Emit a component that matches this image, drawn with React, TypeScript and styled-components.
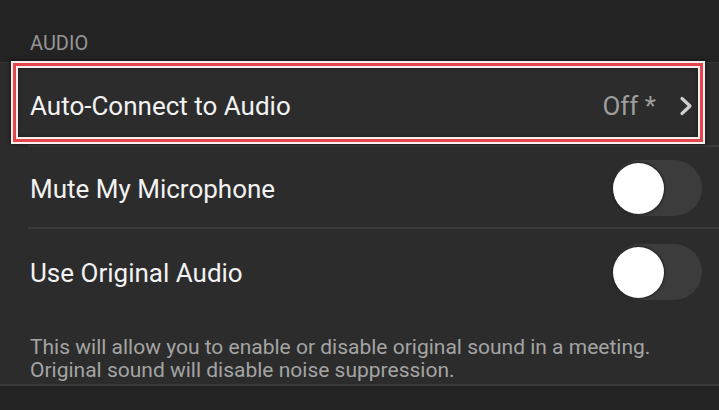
import React from "react";
import styled, { createGlobalStyle } from "styled-components";

const Global = createGlobalStyle`
  html, body { margin: 0; padding: 0; background: #232323; }
  body { font-family: Roboto, "Noto Sans", sans-serif; -webkit-font-smoothing: antialiased; }
  #root { width: 719px; height: 410px; overflow: hidden; background: #232323; }
`;

const Page = styled.div`
  display: flex;
  flex-direction: column;
  width: 719px;
`;

const SectionHeader = styled.div`
  height: 62px;
  box-sizing: border-box;
  padding: 30px 0 0 30px;
  font-size: 20px;
  line-height: 26px;
  color: #959595;
`;

const Panel = styled.div`
  background: #2c2c2c;
  border-top: 1px solid #333333;
  border-bottom: 2px solid #3a3a3a;
  display: flex;
  flex-direction: column;
`;

const Row = styled.div<{ $h: number; $focused?: boolean; $divider?: boolean }>`
  position: relative;
  height: ${(p) => p.$h}px;
  display: flex;
  align-items: center;
  justify-content: space-between;
  padding: 0 17px 0 30px;
  box-sizing: border-box;
  ${(p) =>
    p.$divider
      ? `&::before { content: ""; position: absolute; left: 28px; right: 0; bottom: 0; height: 2px; background: #3a3a3a; }`
      : ""}
  ${(p) =>
    p.$focused
      ? `padding-right: 26px;
        &::after {
          content: ""; position: absolute; left: 13px; right: 16px; top: 0; bottom: 5px;
          border: 3px solid #e2454b;
          box-shadow: 0 0 0 2px #f8eeee, inset 0 0 0 2px #f8eeee, 0 0 4px 3px rgba(0,0,0,0.4), inset 0 0 3px 3px rgba(0,0,0,0.25);
          pointer-events: none;
        }`
      : ""}
`;

const Label = styled.span`
  font-size: 26px;
  color: #f2f2f2;
  margin-top: 1px;
`;

const Value = styled.div`
  display: flex;
  align-items: center;
  gap: 23px;
  font-size: 26px;
  color: #9e9e9e;
  margin-top: 1px;
`;

const Track = styled.div`
  width: 90px;
  height: 56px;
  border-radius: 28px;
  background: #3c3c3c;
  display: flex;
  align-items: center;
  padding-left: 1px;
  box-sizing: border-box;
`;

const Thumb = styled.div`
  width: 51px;
  height: 51px;
  border-radius: 50%;
  background: #ffffff;
  box-shadow: 0 0 2px 1px rgba(0, 0, 0, 0.45);
`;

const Note = styled.div`
  padding: 21px 30px 0 30px;
  height: 69px;
  box-sizing: border-box;
  font-size: 21px;
  line-height: 23px;
  color: #a4a4a4;
  white-space: nowrap;
`;

const Toggle = () => (
  <Track>
    <Thumb />
  </Track>
);

const Chevron = () => (
  <svg width="14" height="20" viewBox="0 0 14 20" fill="none">
    <path d="M3 2.5 L11 10 L3 17.5" stroke="#cfcfcf" strokeWidth="3.2" strokeLinecap="round" strokeLinejoin="round" />
  </svg>
);

export default function App() {
  return (
    <Page>
      <Global />
      <SectionHeader>AUDIO</SectionHeader>
      <Panel>
        <Row $h={84} $focused $divider>
          <Label>Auto-Connect to Audio</Label>
          <Value>
            <span>Off *</span>
            <Chevron />
          </Value>
        </Row>
        <Row $h={82} $divider>
          <Label>Mute My Microphone</Label>
          <Toggle />
        </Row>
        <Row $h={86}>
          <Label>Use Original Audio</Label>
          <Toggle />
        </Row>
        <Note>
          This will allow you to enable or disable original sound in a meeting.
          <br />
          Original sound will disable noise suppression.
        </Note>
      </Panel>
    </Page>
  );
}
